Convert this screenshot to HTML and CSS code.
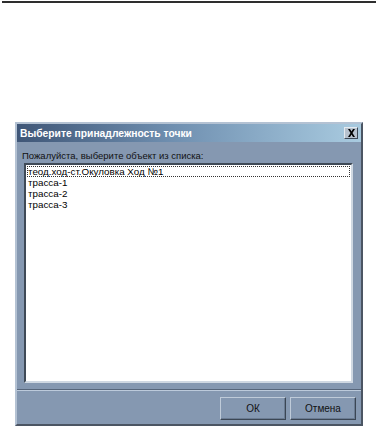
FILE: index.html
```html
<!DOCTYPE html>
<html lang="ru">
<head>
    <meta charset="UTF-8">
    <title>Выберите принадлежность точки</title>
    <link rel="stylesheet" href="styles.css">
</head>
<body>
    <div class="topline"></div>

    <div class="dialog">
        <div class="titlebar">
            <span class="title">Выберите принадлежность точки</span>
            <button class="close">
                <svg width="9" height="8" viewBox="0 0 9 8">
                    <path d="M1 0h2l1.5 2.5L6 0h2L5.5 4 8 8H6L4.5 5.5 3 8H1l2.5-4z" fill="#000"/>
                </svg>
            </button>
        </div>

        <div class="content">
            <div class="label">Пожалуйста, выберите объект из списка:</div>
            <ul class="listbox">
                <li class="item focus">теод.ход-ст.Окуловка Ход №1</li>
                <li class="item">трасса-1</li>
                <li class="item">трасса-2</li>
                <li class="item">трасса-3</li>
            </ul>
        </div>

        <div class="footer">
            <button class="btn">ОК</button>
            <button class="btn">Отмена</button>
        </div>
    </div>
</body>
</html>
```

FILE: styles.css
```css
body {
    margin: 0;
    padding: 0;
    background: #fff;
    font-family: "Liberation Sans", Arial, sans-serif;
    font-size: 10px;
}
.topline {
    height: 2px;
    margin: 1px 2px 0 2px;
    background: #2e2e2e;
}
.dialog {
    width: 344px;
    height: 300px;
    margin: 119px 0 0 15px;
    background: #8598b1;
    border: 2px solid;
    border-color: #b4c2d3 #4b5563 #4b5563 #b4c2d3;
    display: flex;
    flex-direction: column;
}
.titlebar {
    height: 18px;
    padding: 0 3px 0 3px;
    background: linear-gradient(to right, #3f5677, #6f8fb0 45%, #a9cbe0);
    display: flex;
    align-items: center;
    justify-content: space-between;
}
.title {
    color: #fff;
    font-weight: bold;
    font-size: 10.3px;
}
.close {
    width: 14px;
    height: 12px;
    padding: 0;
    background: #b7c2ce;
    border: 1px solid;
    border-color: #e4eaf0 #3e4a58 #3e4a58 #e4eaf0;
    display: flex;
    align-items: center;
    justify-content: center;
}
.content {
    flex: 1;
    padding: 7px 8px 0 5px;
    display: flex;
    flex-direction: column;
}
.label {
    color: #111;
    font-size: 9.5px;
    height: 14px;
    line-height: 14px;
}
.listbox {
    flex: 1;
    margin: 0 0 0 2px;
    padding: 1px 1px;
    list-style: none;
    background: #fff;
    border: 2px solid;
    border-color: #3f4a57 #cfd8e2 #cfd8e2 #3f4a57;
}
.item {
    height: 11px;
    line-height: 11px;
    padding-left: 1px;
    color: #000;
    font-size: 9.8px;
    white-space: nowrap;
}
.focus {
    outline: 1px dotted #333;
    outline-offset: -1px;
}
.footer {
    height: 27px;
    margin-top: 6px;
    border-top: 1px solid #56657a;
    box-shadow: inset 0 1px 0 #bccadb;
    display: flex;
    justify-content: flex-end;
    align-items: flex-start;
    gap: 4px;
    padding: 7px 5px 0 0;
}
.btn {
    width: 66px;
    height: 23px;
    padding: 0;
    background: #8598b1;
    color: #111;
    font-family: "Liberation Sans", Arial, sans-serif;
    font-size: 10px;
    border: 1px solid;
    border-color: #bfcbd9 #3b4654 #3b4654 #bfcbd9;
    box-shadow: inset -1px -1px 0 #6a7b92;
}
```
